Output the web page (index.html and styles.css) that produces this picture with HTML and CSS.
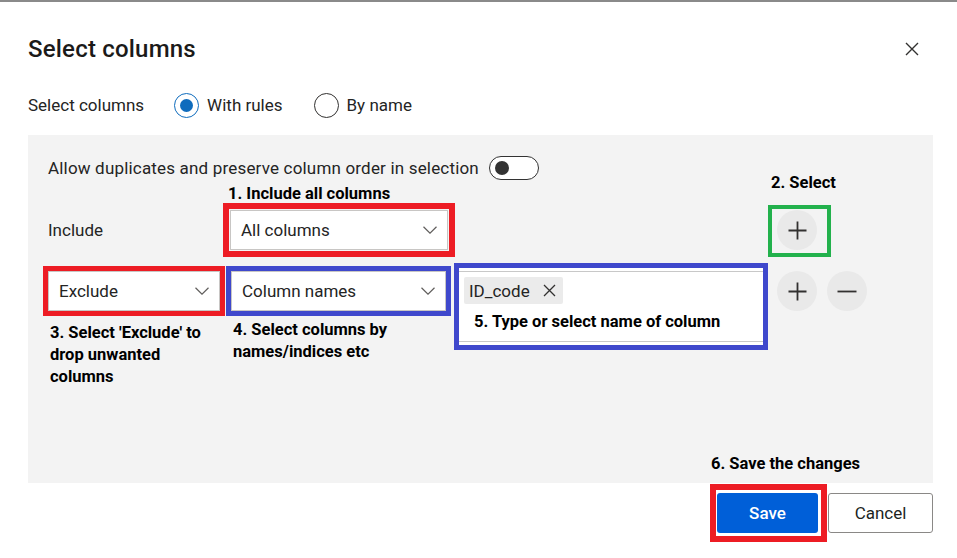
FILE: index.html
```html
<!DOCTYPE html>
<html lang="en">
<head>
<meta charset="utf-8">
<title>Select columns</title>
<link rel="stylesheet" href="styles.css">
</head>
<body>
<div class="topline"></div>
<div class="dialog">
  <header class="head">
    <h1 class="title">Select columns</h1>
    <button class="close" aria-label="Close">
      <svg width="14" height="14" viewBox="0 0 14 14"><path d="M1 1L13 13M13 1L1 13" fill="none" stroke="#323130" stroke-width="1.4"/></svg>
    </button>
  </header>
  <div class="mode">
    <span class="mode-label">Select columns</span>
    <label class="radio radio-on"><span class="ring"></span>With rules</label>
    <label class="radio"><span class="ring"></span>By name</label>
  </div>
  <section class="panel">
    <div class="toggle-row">
      <span class="toggle-text">Allow duplicates and preserve column order in selection</span>
      <span class="switch"><span class="knob"></span></span>
    </div>
    <div class="rules">
      <div class="note n1">1. Include all columns</div>
      <div class="note n2">2. Select</div>

      <div class="lbl">Include</div>
      <div class="dd dd-all"><span>All columns</span><svg class="chev" width="14" height="8" viewBox="0 0 14 8"><path d="M0.5 0.8L7 7.2L13.5 0.8" fill="none" stroke="#605e5c" stroke-width="1.2"/></svg></div>
      <div class="plus-call"><button class="circle" aria-label="Add"><svg width="19" height="19" viewBox="0 0 19 19"><path d="M9.5 0.5V18.5M0.5 9.5H18.5" fill="none" stroke="#323130" stroke-width="1.8"/></svg></button></div>

      <div class="dd dd-ex"><span>Exclude</span><svg class="chev" width="14" height="8" viewBox="0 0 14 8"><path d="M0.5 0.8L7 7.2L13.5 0.8" fill="none" stroke="#605e5c" stroke-width="1.2"/></svg></div>
      <div class="dd dd-cols"><span>Column names</span><svg class="chev" width="14" height="8" viewBox="0 0 14 8"><path d="M0.5 0.8L7 7.2L13.5 0.8" fill="none" stroke="#605e5c" stroke-width="1.2"/></svg></div>
      <div class="picker">
        <div class="picker-in">
          <span class="tag">ID_code<svg width="13" height="13" viewBox="0 0 13 13"><path d="M1 1L12 12M12 1L1 12" fill="none" stroke="#323130" stroke-width="1.3"/></svg></span>
          <div class="note n5">5. Type or select name of column</div>
        </div>
      </div>
      <button class="circle add2" aria-label="Add rule"><svg width="19" height="19" viewBox="0 0 19 19"><path d="M9.5 0.5V18.5M0.5 9.5H18.5" fill="none" stroke="#323130" stroke-width="1.8"/></svg></button>
      <button class="circle rem" aria-label="Remove rule"><svg width="20" height="19" viewBox="0 0 20 19"><path d="M0.5 9.5H19.5" fill="none" stroke="#323130" stroke-width="1.8"/></svg></button>

      <div class="note n3">3. Select 'Exclude' to<br>drop unwanted<br>columns</div>
      <div class="note n4">4. Select columns by<br>names/indices etc</div>
    </div>
    <div class="note n6">6. Save the changes</div>
  </section>
  <footer class="foot">
    <span class="save-call"><button class="btn save">Save</button></span>
    <button class="btn cancel">Cancel</button>
  </footer>
</div>
</body>
</html>
```
FILE: styles.css
```css
* { box-sizing: border-box; }
html, body { margin: 0; }
body {
  width: 957px;
  height: 558px;
  overflow: hidden;
  background: #fff;
  font-family: Roboto, "Noto Sans", sans-serif;
  font-size: 17px;
  color: #242424;
}
.topline { height: 2px; background: #8a8a8a; }
.dialog { padding: 0 24px 0 28px; }

.head {
  display: flex;
  align-items: center;
  justify-content: space-between;
  height: 32px;
  margin-top: 31px;
}
.title {
  margin: 0;
  font-size: 24px;
  font-weight: 500;
  line-height: 32px;
  letter-spacing: 0.2px;
  color: #1b1a19;
}
.close {
  width: 32px;
  height: 32px;
  margin-right: 5px;
  padding: 0;
  border: 0;
  background: transparent;
  display: flex;
  align-items: center;
  justify-content: center;
}

.mode {
  display: flex;
  align-items: center;
  height: 32px;
  margin-top: 24px;
}
.mode-label { margin-right: 30px; }
.radio {
  display: flex;
  align-items: center;
  gap: 8px;
  margin-right: 31px;
}
.ring {
  width: 25px;
  height: 25px;
  border-radius: 50%;
  border: 1.5px solid #323130;
  display: flex;
  align-items: center;
  justify-content: center;
  background: #fff;
}
.radio-on .ring { border-color: #0f6cbd; }
.radio-on .ring::after {
  content: "";
  width: 13px;
  height: 13px;
  border-radius: 50%;
  background: #0f6cbd;
}

.panel {
  height: 348px;
  margin-top: 14px;
  background: #f3f3f3;
  padding: 20px 0 9px 20px;
  display: flex;
  flex-direction: column;
}
.toggle-row {
  display: flex;
  align-items: center;
  gap: 10px;
  height: 25px;
}
.toggle-text { letter-spacing: 0.18px; }
.switch {
  width: 50px;
  height: 24px;
  border: 1.5px solid #333;
  border-radius: 12px;
  background: #fff;
  display: flex;
  align-items: center;
  padding-left: 5px;
}
.knob {
  width: 14px;
  height: 14px;
  border-radius: 50%;
  background: #333;
}

.rules {
  display: grid;
  grid-template-columns: 182px 229px 318px 50px 40px;
  grid-template-rows: 30px 61px 51px auto;
  align-items: start;
}
.note {
  font-weight: 700;
  font-size: 16.5px;
  line-height: 20px;
  color: #000;
  white-space: nowrap;
}
.n1 { grid-column: 2; grid-row: 1; align-self: end; margin: 0 0 6px -2px; }
.n2 { grid-column: 4; grid-row: 1; margin: -7px 0 0 -6px; }
.n3 { grid-column: 1; grid-row: 4; line-height: 22px; margin-left: 2px; }
.n4 { grid-column: 2; grid-row: 4; line-height: 22px; margin: -3px 0 0 3px; }
.n5 { margin: 8px 0 0 10px; }
.n6 { margin-top: auto; margin-left: 663px; }

.lbl { grid-column: 1; grid-row: 2; line-height: 40px; }
.dd {
  height: 40px;
  background: #fff;
  border: 1px solid #c8c6c4;
  border-radius: 0;
  display: flex;
  align-items: center;
  justify-content: space-between;
  padding: 0 10px;
}
.dd-all {
  grid-column: 2;
  grid-row: 2;
  width: 218px;
  outline: 6px solid #ed1c24;
  outline-offset: 1px;
}
.dd-ex {
  grid-column: 1;
  grid-row: 3;
  width: 172px;
  outline: 5px solid #ed1c24;
}
.dd-cols {
  grid-column: 2;
  grid-row: 3;
  width: 215px;
  margin-left: 1px;
  outline: 5px solid #3f48cc;
}
.plus-call {
  grid-column: 4;
  grid-row: 2;
  margin: -1px 0 0 -5px;
  padding: 1px 4px 3px 5px;
  outline: 4px solid #22b14c;
}
.circle {
  width: 40px;
  height: 40px;
  border-radius: 50%;
  background: #e9e9e9;
  border: 0;
  padding: 0;
  display: flex;
  align-items: center;
  justify-content: center;
}
.add2 { grid-column: 4; grid-row: 3; }
.rem { grid-column: 5; grid-row: 3; }

.picker {
  grid-column: 3;
  grid-row: 3 / 5;
  width: 304px;
  margin-top: -3px;
  background: #fff;
  padding: 3px 0;
  outline: 5px solid #3f48cc;
}
.picker-in {
  height: 71px;
  border-top: 1px solid #c8c8c8;
  border-bottom: 1px solid #c8c8c8;
  padding: 5px 0 0 5px;
}
.tag {
  display: inline-flex;
  align-items: center;
  gap: 13px;
  height: 27px;
  padding: 0 7px 0 5px;
  background: #ebebeb;
  border-radius: 2px;
  color: #242424;
}

.foot {
  display: flex;
  justify-content: flex-end;
  align-items: center;
  gap: 7px;
  margin-top: 7px;
}
.save-call {
  display: flex;
  padding: 3px 3px 3px 1px;
  outline: 6px solid #ed1c24;
}
.btn {
  height: 40px;
  border-radius: 3px;
  font-family: inherit;
  font-size: 17px;
  padding: 0;
}
.save {
  width: 101px;
  background: #005fd8;
  color: #fff;
  border: 0;
  font-weight: 500;
}
.cancel {
  width: 105px;
  background: #fff;
  border: 1px solid #8a8886;
  color: #201f1e;
}
```
